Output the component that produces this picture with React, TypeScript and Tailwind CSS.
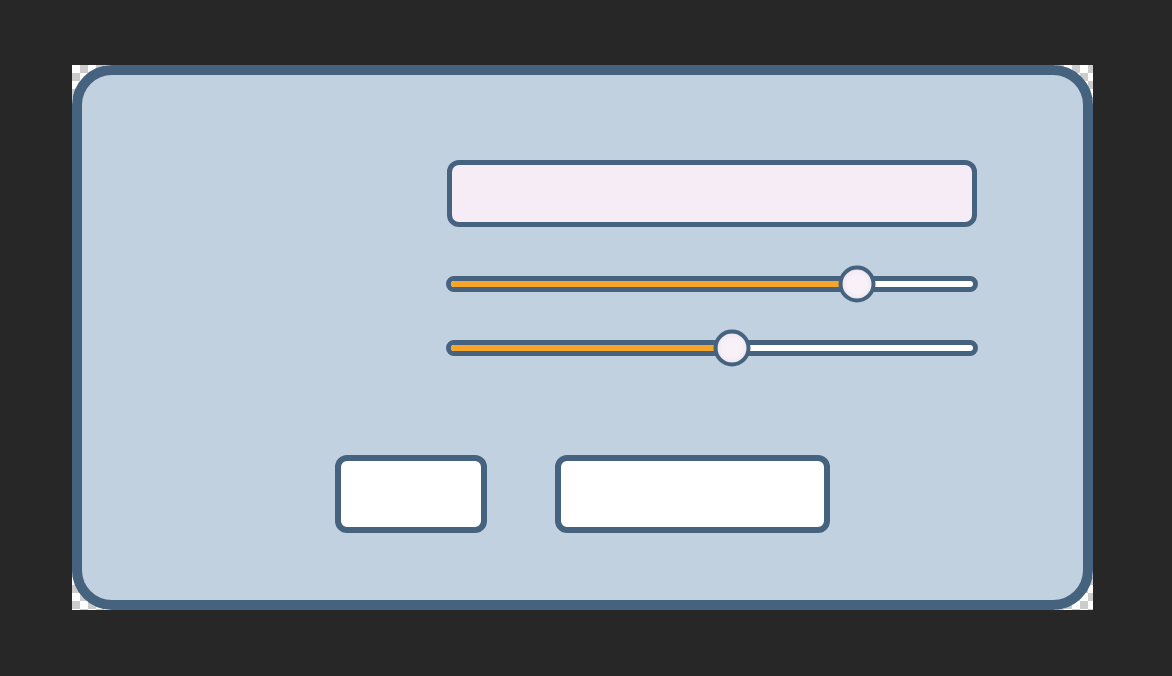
import React from "react";

function Slider({ pos }: { pos: number }) {
  // pos: thumb center in px from track outer left
  return (
    <div className="relative ml-[364px] flex h-[36px] w-[532px] items-center">
      <div className="relative h-[16px] w-full overflow-hidden rounded-full border-[5px] border-[#45627f] bg-white">
        <div className="h-full bg-[#f5a62a]" style={{ width: pos - 5 }} />
      </div>
      <div
        className="absolute top-1/2 h-[37px] w-[37px] -translate-x-1/2 -translate-y-1/2 rounded-full border-[4px] border-[#45627f] bg-[radial-gradient(circle,#f8f1f8_45%,#e9dfea_100%)]"
        style={{ left: pos }}
      />
    </div>
  );
}

export default function App() {
  return (
    <div className="min-h-[676px] w-[1172px] bg-[#272727] pl-[72px] pt-[65px]">
      <div className="h-[545px] w-[1021px] bg-[repeating-conic-gradient(#cccccc_0%_25%,#ffffff_0%_50%)] bg-size-[16px_16px]">
        <div className="flex h-full w-full flex-col rounded-[40px] border-[10px] border-[#45627f] bg-[#c1d1e0]">
          <div className="ml-[365px] mt-[85px] h-[67px] w-[530px] rounded-[12px] border-[5px] border-[#45627f] bg-[#f6ecf6]" />
          <div className="mt-[39px]">
            <Slider pos={410.5} />
          </div>
          <div className="mt-[28px]">
            <Slider pos={285.5} />
          </div>
          <div className="ml-[253px] mt-[89px] flex gap-[68px]">
            <div className="h-[78px] w-[152px] rounded-[12px] border-[6px] border-[#45627f] bg-white" />
            <div className="h-[78px] w-[275px] rounded-[12px] border-[6px] border-[#45627f] bg-white" />
          </div>
        </div>
      </div>
    </div>
  );
}
